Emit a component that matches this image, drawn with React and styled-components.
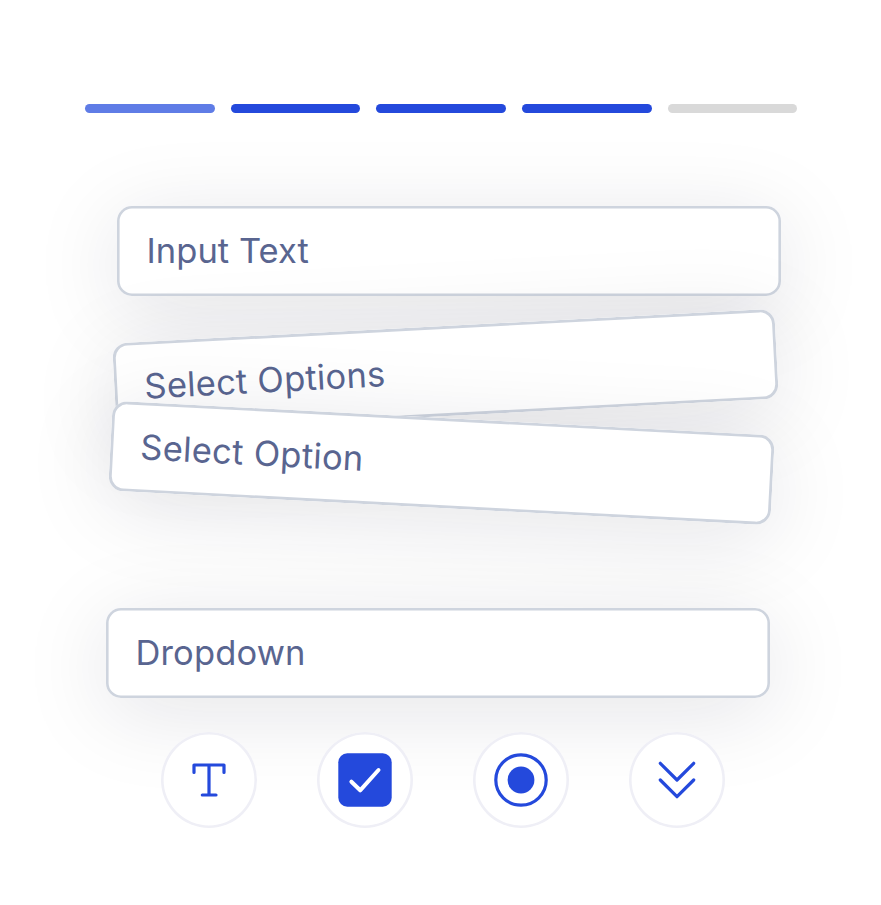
import React from "react";
import styled, { createGlobalStyle } from "styled-components";

const GlobalStyle = createGlobalStyle`
  * { box-sizing: border-box; }
  body { margin: 0; background: #fff; }
`;

const Page = styled.main`
  width: 881px;
  height: 905px;
  overflow: hidden;
  background: #fff;
  font-family: "Inter", "Liberation Sans", sans-serif;
`;

const Progress = styled.div`
  display: grid;
  grid-template-columns: repeat(5, 1fr);
  gap: 16px;
  width: 712.5px;
  margin: 103.5px 0 0 85px;
`;

const tones = { active: "#5f7ce6", done: "#2449dc", idle: "#d9d9d9" };

const Segment = styled.span`
  height: 9px;
  border-radius: 4.5px;
  background: ${(p) => tones[p.$tone]};
`;

const Fields = styled.div`
  display: flex;
  flex-direction: column;
  margin-top: 93.5px;
`;

const Field = styled.div`
  display: flex;
  align-items: center;
  width: ${(p) => (p.$tilt ? 663 : 664)}px;
  height: 90px;
  margin-top: ${(p) => p.$gap}px;
  margin-left: ${(p) => p.$indent}px;
  padding-left: 30px;
  border-radius: 15px;
  background: #fff;
  box-shadow:
    inset 0 0 0 ${(p) => (p.$tilt ? 2.9 : 2.6)}px #ced4de,
    0 14px 88px rgba(20, 20, 43, 0.115);
  transform: rotate(${(p) => p.$tilt}deg);
`;

const Label = styled.span`
  font-size: 34.5px;
  font-weight: 400;
  line-height: 44px;
  white-space: nowrap;
  color: #596590;
  letter-spacing: ${(p) => p.$tracking}px;
`;

const Tools = styled.div`
  position: relative;
  display: flex;
  gap: 60px;
  margin: 34px 0 0 161px;
`;

const Tool = styled.div`
  display: grid;
  place-items: center;
  width: 96px;
  height: 96px;
  border-radius: 50%;
  background: #fff;
  box-shadow: inset 0 0 0 2.6px #efeff6;
`;

const Icon = styled.svg`
  display: block;
  width: 56px;
  height: 56px;
  fill: none;
  stroke: #2449dc;
  stroke-width: 3.2;
  stroke-linecap: round;
  stroke-linejoin: round;
`;

const segments = ["active", "done", "done", "done", "idle"];

const fields = [
  { text: "Input Text", gap: 0, indent: 116.5, tilt: 0, tracking: 0.05 },
  { text: "Select Options", gap: 30, indent: 113.5, tilt: -3, tracking: 0.25 },
  { text: "Select Option", gap: 2, indent: 109.5, tilt: 3, tracking: 0.3 },
  { text: "Dropdown", gap: 100, indent: 105.5, tilt: 0, tracking: 0.15 },
];

export default function App() {
  return (
    <>
      <GlobalStyle />
      <Page>
        <Progress>
          {segments.map((tone, i) => (
            <Segment key={i} $tone={tone} />
          ))}
        </Progress>
        <Fields>
          {fields.map((f) => (
            <Field key={f.text} $gap={f.gap} $indent={f.indent} $tilt={f.tilt}>
              <Label $tracking={f.tracking}>{f.text}</Label>
            </Field>
          ))}
        </Fields>
        <Tools>
          <Tool>
            <Icon viewBox="0 0 56 56">
              <path d="M13 20.5V13H43V20.5M28 13V43M21.3 43H35" />
            </Icon>
          </Tool>
          <Tool>
            <Icon viewBox="0 0 56 56">
              <rect x="1.3" y="1.3" width="53.4" height="53.4" rx="9" fill="#2449dc" stroke="none" />
              <path d="M14.4 29.7L23.2 38.3L41.5 18" stroke="#fff" strokeWidth="4" />
            </Icon>
          </Tool>
          <Tool>
            <Icon viewBox="0 0 56 56">
              <circle cx="28" cy="28" r="25.2" />
              <circle cx="28" cy="28" r="13.4" fill="#2449dc" stroke="none" />
            </Icon>
          </Tool>
          <Tool>
            <Icon viewBox="0 0 56 56">
              <path d="M11.3 11.3L28 28L44.7 11.3M11.3 28L28 44.7L44.7 28" />
            </Icon>
          </Tool>
        </Tools>
      </Page>
    </>
  );
}
